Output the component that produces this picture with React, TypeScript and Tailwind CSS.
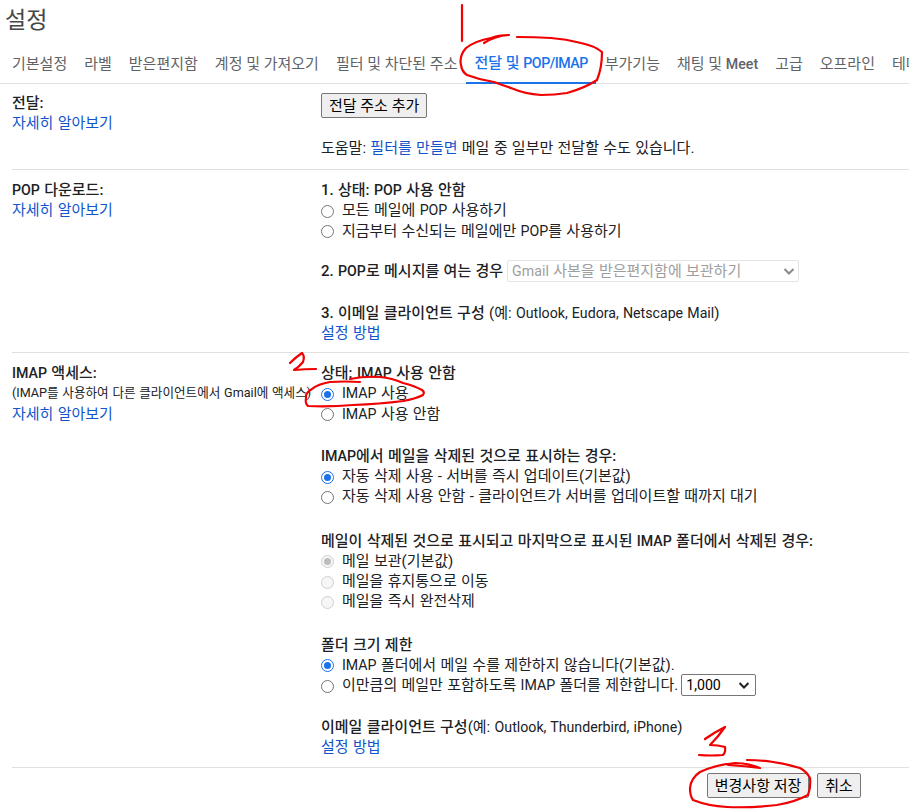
const font = "font-['Roboto','Noto_Sans_CJK_KR',sans-serif]"

const row = 'h-[20.25px]'

// latin runs sit a bit smaller than the hangul around them
function L({ children }: { children: React.ReactNode }) {
  return <span className="text-[14.2px]">{children}</span>
}

function Radio({ checked, disabled, label }: { checked?: boolean; disabled?: boolean; label: React.ReactNode }) {
  return (
    <div className="flex h-[20.25px] items-center">
      <span
        className={
          'mt-[2px] mr-[8px] flex h-[13px] w-[13px] shrink-0 items-center justify-center rounded-full border ' +
          (disabled
            ? 'border-[#d0d0d0] bg-[#f6f6f6]'
            : checked
              ? 'border-[#1a73e8] bg-white'
              : 'border-[#767676] bg-white')
        }
      >
        {checked && (
          <span className={'h-[7px] w-[7px] rounded-full ' + (disabled ? 'bg-[#bdbdbd]' : 'bg-[#1a73e8]')} />
        )}
      </span>
      <span className="text-[#202124]">{label}</span>
    </div>
  )
}

function Link({ children }: { children: React.ReactNode }) {
  return <span className="text-[#1155cc]">{children}</span>
}

function LeftCol({ title, note }: { title: React.ReactNode; note?: string }) {
  return (
    <div className="w-[321px] shrink-0 pl-3">
      <div className="h-[20.25px] font-medium text-[#202124]">{title}</div>
      {note && <div className="h-[20.25px] whitespace-nowrap text-[12.6px] text-[#202124]">{note}</div>}
      <div className="h-[20.25px]">
        <Link>자세히 알아보기</Link>
      </div>
    </div>
  )
}

function Annotations() {
  return (
    <svg className="pointer-events-none absolute top-0 left-0" width="909" height="811" fill="none" stroke="#f00000" strokeWidth="2.2" strokeLinecap="round" strokeLinejoin="round">
      <path d="M462 5 L462 41" />
      <path d="M484 43 Q495 36 509 35 Q498 35 491 38 Q475 41 466 48 Q459 56 461 65 Q462 72 467 75 Q480 80 494 82 Q502 85 511 88 Q525 94 541 95 Q555 95 567 93 Q585 88 597 80 Q602 68 602 52 Q595 46 581 43 Q566 39 551 38 Q535 37 517 37" />
      <path d="M290 363 Q296 357 302 353 Q305 356 303 362 Q299 367 294 370 Q305 369 316 369" />
      <path d="M360 382 Q345 381 330 382 Q318 384 312 389 Q305 393 306 398 Q305 404 308 406 Q330 407 353 405 Q380 404 403 401 Q415 399 423 395 Q425 392 422 390 Q415 386 403 383 Q392 378 380 377 Q365 376 350 379" />
      <path d="M705 739 Q715 732 725 727 Q718 737 710 745 Q718 745 725 747 Q726 752 723 755 Q710 756 699 755" />
      <path d="M728 765 Q745 766 760 768 Q747 763 735 763 Q715 765 700 772 Q691 778 690 788 Q690 796 693 800 Q708 806 727 807 Q752 808 777 805 Q795 802 808 795 Q811 787 810 778 Q807 772 800 768 Q787 764 773 762 Q760 760 747 760" />
    </svg>
  )
}

export default function App() {
  return (
    <div className={'relative h-[811px] w-[909px] overflow-hidden bg-white text-[15px] leading-5 [word-spacing:0.6px] ' + font}>
      <div className="pt-[6px] pl-[5px] text-[23px] leading-[29px] text-[#444746]">설정</div>

      <div className="mt-[9px] flex h-[40px] items-stretch whitespace-nowrap border-b border-[#e0e0e0] pl-[3.5px] text-[#5f6368] [word-spacing:0px]">
        <div className="flex items-center px-[8.5px]">기본설정</div>
        <div className="flex items-center px-[8.5px]">라벨</div>
        <div className="flex items-center px-[8.5px]">받은편지함</div>
        <div className="flex items-center px-[8.5px]">계정 및 가져오기</div>
        <div className="flex items-center px-[8.5px]">필터 및 차단된 주소</div>
        <div className="-mb-px flex items-center border-b-2 border-[#1a73e8] px-[8.5px] font-medium text-[#1a73e8]">
          <span>
            전달 및 <span className="text-[14.2px] tracking-[-0.5px]">POP/IMAP</span>
          </span>
        </div>
        <div className="flex items-center px-[8.5px]">부가기능</div>
        <div className="flex items-center px-[8.5px]">
          <span>
            채팅 및 <span className="text-[14.2px] font-medium">Meet</span>
          </span>
        </div>
        <div className="flex items-center px-[8.5px]">고급</div>
        <div className="flex items-center px-[8.5px]">오프라인</div>
        <div className="flex items-center px-[8.5px]">테마</div>
      </div>

      <div className="flex h-[85px] pt-[9px]">
        <LeftCol title="전달:" />
        <div>
          <button className="h-[25px] rounded-[2px] border border-[#767676] bg-[#efefef] px-[7px] text-[15px] leading-[20px] text-black">
            전달 주소 추가
          </button>
          <div className="mt-[20px] text-[#202124]">
            도움말: <Link>필터를 만들면</Link> 메일 중 일부만 전달할 수도 있습니다.
          </div>
        </div>
      </div>

      <div className="ml-3 border-t border-[#e0e0e0]" />
      <div className="flex h-[182px] pt-[10px]">
        <LeftCol title={<><L>POP</L> 다운로드:</>} />
        <div>
          <div className={row + ' font-medium text-[#202124]'}>1. 상태: <L>POP</L> 사용 안함</div>
          <Radio label={<>모든 메일에 <L>POP</L> 사용하기</>} />
          <Radio label={<>지금부터 수신되는 메일에만 <L>POP</L>를 사용하기</>} />
          <div className="mt-[19.5px] flex h-[22px] items-center">
            <span className="mr-[4px] font-medium text-[#202124]">2. <L>POP</L>로 메시지를 여는 경우</span>
            <div className="flex h-[22px] w-[292px] items-center justify-between rounded-[2px] border border-[#e4e4e4] bg-white pr-[3px] pl-[4px] text-[#9e9e9e]">
              <span><L>Gmail</L> 사본을 받은편지함에 보관하기</span>
              <svg width="12" height="12" viewBox="0 0 12 12" fill="none" stroke="#8a8a8a" strokeWidth="2">
                <path d="M1.5 4 L6 8.5 L10.5 4" />
              </svg>
            </div>
          </div>
          <div className={'mt-[20.5px] text-[#202124] ' + row}>
            <span className="font-medium">3. 이메일 클라이언트 구성</span> (예: <L>Outlook, Eudora, Netscape Mail</L>)
          </div>
          <div className={row}>
            <Link>설정 방법</Link>
          </div>
        </div>
      </div>

      <div className="ml-3 border-t border-[#e0e0e0]" />
      <div className="flex h-[414px] pt-[10px]">
        <LeftCol title={<><L>IMAP</L> 액세스:</>} note="(IMAP를 사용하여 다른 클라이언트에서 Gmail에 액세스)" />
        <div>
          <div className={row + ' font-medium text-[#202124]'}>상태: <L>IMAP</L> 사용 안함</div>
          <Radio checked label={<><L>IMAP</L> 사용</>} />
          <Radio label={<><L>IMAP</L> 사용 안함</>} />

          <div className={'mt-[22px] font-medium text-[#202124] ' + row}><L>IMAP</L>에서 메일을 삭제된 것으로 표시하는 경우:</div>
          <Radio checked label="자동 삭제 사용 - 서버를 즉시 업데이트(기본값)" />
          <Radio label="자동 삭제 사용 안함 - 클라이언트가 서버를 업데이트할 때까지 대기" />

          <div className={'mt-[24px] font-medium whitespace-nowrap text-[#202124] ' + row}>
            메일이 삭제된 것으로 표시되고 마지막으로 표시된 <L>IMAP</L> 폴더에서 삭제된 경우:
          </div>
          <Radio disabled checked label="메일 보관(기본값)" />
          <Radio disabled label="메일을 휴지통으로 이동" />
          <Radio disabled label="메일을 즉시 완전삭제" />

          <div className={'mt-[23px] font-medium text-[#202124] ' + row}>폴더 크기 제한</div>
          <Radio checked label={<><L>IMAP</L> 폴더에서 메일 수를 제한하지 않습니다(기본값).</>} />
          <div className="flex h-[20.25px] items-center">
            <Radio label={<>이만큼의 메일만 포함하도록 <L>IMAP</L> 폴더를 제한합니다.</>} />
            <div className="ml-[3px] flex h-[22px] w-[75px] items-center justify-between rounded-[2px] border border-[#767676] bg-white pr-[5px] pl-[4px] text-black">
              <L>1,000</L>
              <svg width="12" height="12" viewBox="0 0 12 12" fill="none" stroke="#222" strokeWidth="2">
                <path d="M1.5 4 L6 8.5 L10.5 4" />
              </svg>
            </div>
          </div>

          <div className={'mt-[21.5px] text-[#202124] ' + row}>
            <span className="font-medium">이메일 클라이언트 구성</span>(예: <L>Outlook, Thunderbird, iPhone</L>)
          </div>
          <div className={row}>
            <Link>설정 방법</Link>
          </div>
        </div>
      </div>

      <div className="ml-3 border-t border-[#e0e0e0]" />
      <div className="flex justify-end gap-[8px] pt-[5px] pr-[48px]">
        <button className="h-[25px] w-[102px] rounded-[2px] border border-[#767676] bg-[#efefef] text-[15px] text-black">변경사항 저장</button>
        <button className="h-[25px] w-[44px] rounded-[2px] border border-[#767676] bg-[#efefef] text-[15px] text-black">취소</button>
      </div>

      <Annotations />
    </div>
  )
}
